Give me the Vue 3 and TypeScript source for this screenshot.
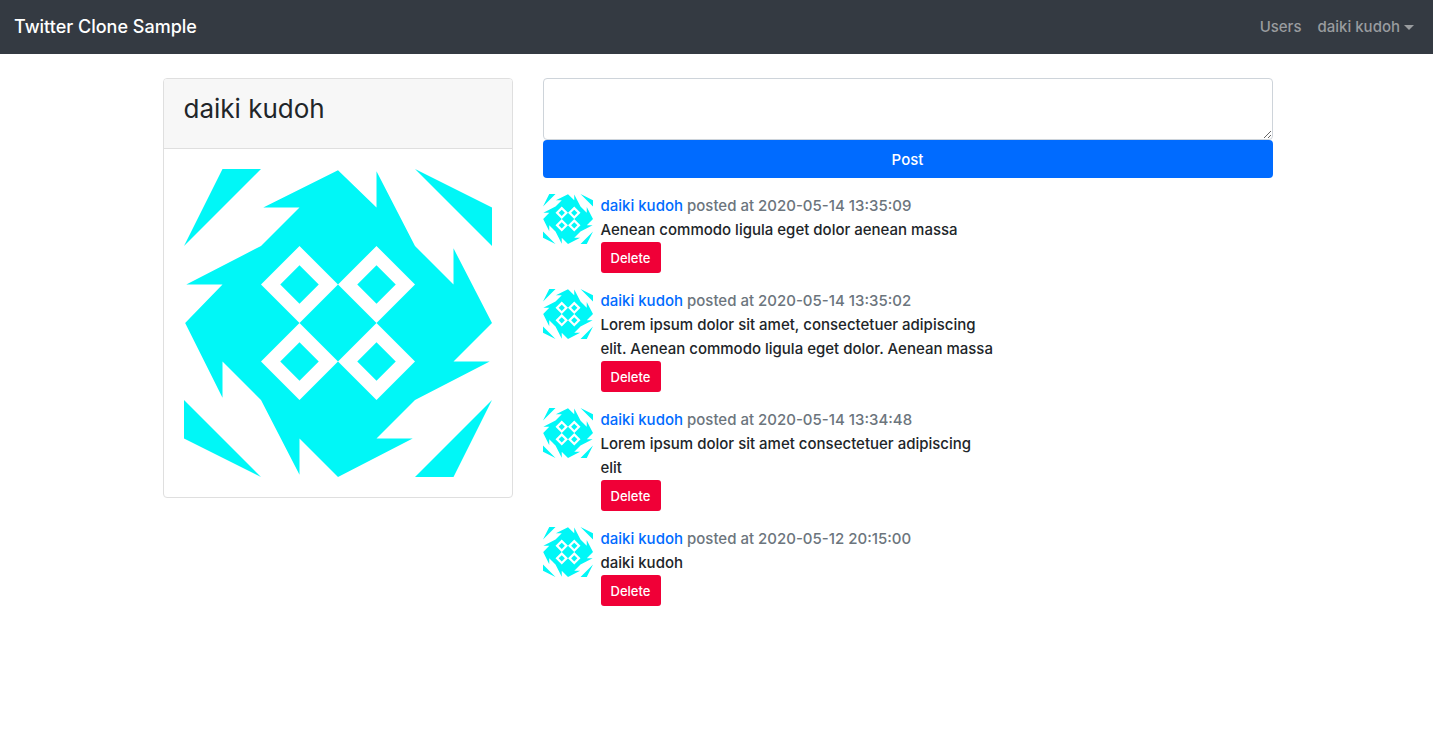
<script setup lang="ts">
import { ref } from 'vue'

interface Post {
  id: number
  author: string
  postedAt: string
  body: string
}

const user = 'daiki kudoh'
const draft = ref('')
const posts = ref<Post[]>([
  { id: 4, author: user, postedAt: '2020-05-14 13:35:09', body: 'Aenean commodo ligula eget dolor aenean massa' },
  { id: 3, author: user, postedAt: '2020-05-14 13:35:02', body: 'Lorem ipsum dolor sit amet, consectetuer adipiscing elit. Aenean commodo ligula eget dolor. Aenean massa' },
  { id: 2, author: user, postedAt: '2020-05-14 13:34:48', body: 'Lorem ipsum dolor sit amet consectetuer adipiscing elit' },
  { id: 1, author: user, postedAt: '2020-05-12 20:15:00', body: 'daiki kudoh' },
])

const pad = (n: number): string => String(n).padStart(2, '0')

function addPost(): void {
  const body = draft.value.trim()
  if (!body) return
  const d = new Date()
  const postedAt = `${d.getFullYear()}-${pad(d.getMonth() + 1)}-${pad(d.getDate())} ${pad(d.getHours())}:${pad(d.getMinutes())}:${pad(d.getSeconds())}`
  posts.value.unshift({ id: d.getTime(), author: user, postedAt, body })
  draft.value = ''
}

function removePost(id: number): void {
  posts.value = posts.value.filter((p) => p.id !== id)
}
</script>

<template>
  <svg class="defs" aria-hidden="true">
    <symbol id="identicon" viewBox="0 0 8 8">
      <path
        fill="#00f7f7"
        fill-rule="evenodd"
        d="M1 0H2L0 2ZM6 0L8 1V2ZM8 6L7 8H6ZM0 6L2 8L0 7Z
           M4 .03L5 1V.06L6 2L7 3V2.06L8 4L7 5H7.94L6 6L5 7H5.94L4 8L3 7V7.94L2 6L1 5V5.94L.03 4L1 3H.06L2 2L3 1H2.06Z
           M3 2L2 3L3 4L4 3ZM5 2L4 3L5 4L6 3ZM3 4L2 5L3 6L4 5ZM5 4L4 5L5 6L6 5Z
           M3 2.5L3.5 3L3 3.5L2.5 3ZM5 2.5L5.5 3L5 3.5L4.5 3ZM3 4.5L3.5 5L3 5.5L2.5 5ZM5 4.5L5.5 5L5 5.5L4.5 5Z"
      />
    </symbol>
  </svg>

  <header class="navbar">
    <a class="brand" href="#">Twitter Clone Sample</a>
    <nav class="links">
      <a href="#">Users</a>
      <a class="dropdown" href="#" aria-haspopup="true">{{ user }}<span class="caret"></span></a>
    </nav>
  </header>

  <main class="container">
    <aside class="card">
      <div class="card-header"><h3>{{ user }}</h3></div>
      <div class="card-body">
        <svg class="portrait" role="img" :aria-label="user"><use href="#identicon" /></svg>
      </div>
    </aside>

    <section class="feed">
      <form @submit.prevent="addPost">
        <textarea v-model="draft" rows="2" aria-label="New post"></textarea>
        <button class="submit" type="submit">Post</button>
      </form>
      <ul class="posts">
        <li v-for="post in posts" :key="post.id">
          <svg class="avatar" role="img" :aria-label="post.author"><use href="#identicon" /></svg>
          <div class="content">
            <div class="meta"><a href="#">{{ post.author }}</a> posted at {{ post.postedAt }}</div>
            <p>{{ post.body }}</p>
            <button class="delete" type="button" @click="removePost(post.id)">Delete</button>
          </div>
        </li>
      </ul>
    </section>
  </main>
</template>

<style>
body {
  margin: 0;
  background: #fff;
  color: #212529;
  font: 450 15px/24px Inter, Roboto, "Liberation Sans", sans-serif;
}
</style>

<style scoped>
* {
  box-sizing: border-box;
}
a {
  color: #006bff;
  text-decoration: none;
}
.defs {
  display: none;
}
.navbar {
  display: flex;
  align-items: center;
  justify-content: space-between;
  height: 54px;
  padding: 0 19px 0 14px;
  background: #343a42;
}
.brand {
  color: #fff;
  font-size: 18px;
  font-weight: 500;
}
.links {
  display: flex;
  gap: 16px;
}
.links a {
  color: #999c9f;
}
.dropdown {
  display: flex;
  align-items: center;
  gap: 4px;
}
.caret {
  border: 5px solid transparent;
  border-top-color: currentColor;
  border-bottom: 0;
}
.container {
  display: grid;
  grid-template-columns: 350px minmax(0, 1fr);
  align-items: start;
  gap: 30px;
  max-width: 1136px;
  margin: 24px auto 0;
  padding: 0 12px 0 14px;
}
.card {
  border: 1px solid #dfdfdf;
  border-radius: 4px;
  overflow: hidden;
}
.card-header {
  padding: 12px 20px;
  border-bottom: 1px solid #dfdfdf;
  background: #f7f7f7;
}
h3 {
  margin: 0 0 10px;
  font-size: 26px;
  font-weight: 400;
  line-height: 35px;
}
.card-body {
  padding: 20px;
}
.portrait {
  display: block;
  width: 100%;
  height: auto;
  aspect-ratio: 1;
}
textarea {
  display: block;
  width: 100%;
  height: 62px;
  padding: 6px 12px;
  border: 1px solid #ced4da;
  border-radius: 4px;
  font: inherit;
  resize: vertical;
}
button {
  border: 0;
  border-radius: 4px;
  color: #fff;
  font-family: inherit;
  font-weight: 500;
  cursor: pointer;
}
.submit {
  display: block;
  width: 100%;
  height: 38px;
  background: #006bff;
  font-size: 15px;
}
.posts {
  display: grid;
  gap: 16px;
  margin: 16px 0 0;
  padding: 0;
  list-style: none;
}
.posts li {
  display: flex;
  gap: 8px;
}
.avatar {
  flex: none;
  width: 50px;
  height: 50px;
}
.content {
  max-width: 393px;
}
.meta {
  color: #6c757d;
}
p {
  margin: 0;
}
.delete {
  display: block;
  min-width: 60px;
  height: 31px;
  padding: 0 9px;
  border-radius: 3px;
  background: #f00037;
  font-size: 13px;
}
</style>
